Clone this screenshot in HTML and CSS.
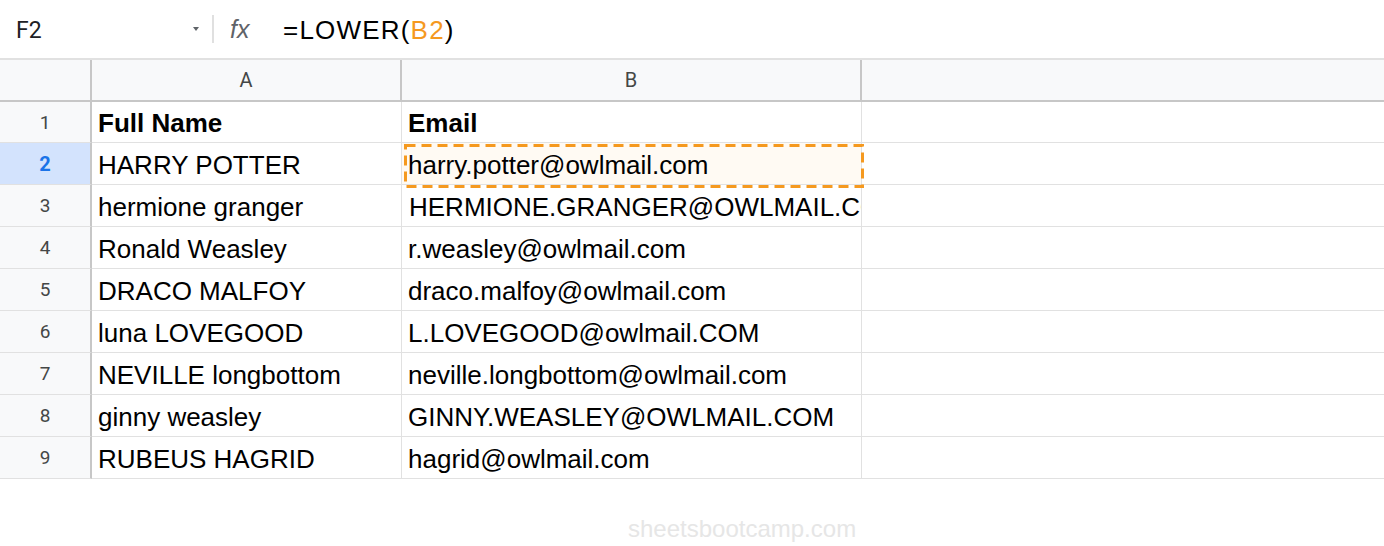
FILE: index.html
```html
<!DOCTYPE html>
<html>
<head>
<meta charset="utf-8">
<link rel="stylesheet" href="styles.css">
</head>
<body>
<div class="formula-bar">
  <div class="name-box"><span class="name">F2</span><span class="caret"></span></div>
  <div class="sep"></div>
  <div class="fx">fx</div>
  <div class="formula">=LOWER(<span class="ref">B2</span>)</div>
</div>
<div class="grid">
  <div class="hdr corner"></div>
  <div class="hdr col-a">A</div>
  <div class="hdr col-b">B</div>
  <div class="hdr fill"></div>

  <div class="rn first">1</div>
  <div class="c a first bold">Full Name</div>
  <div class="c b first bold">Email</div>
  <div class="c f first"></div>

  <div class="rn sel">2</div>
  <div class="c a">HARRY POTTER</div>
  <div class="c b active"><span class="txt">harry.potter@owlmail.com</span><svg class="ants" width="460" height="44" viewBox="0 0 460 44"><rect x="1.5" y="1.5" width="457" height="41" fill="none" stroke="#f5991f" stroke-width="3" stroke-dasharray="10 6"/></svg></div>
  <div class="c f"></div>

  <div class="rn">3</div>
  <div class="c a">hermione granger</div>
  <div class="c b clip">HERMIONE.GRANGER@OWLMAIL.COM</div>
  <div class="c f"></div>

  <div class="rn">4</div>
  <div class="c a">Ronald Weasley</div>
  <div class="c b">r.weasley@owlmail.com</div>
  <div class="c f"></div>

  <div class="rn">5</div>
  <div class="c a">DRACO MALFOY</div>
  <div class="c b">draco.malfoy@owlmail.com</div>
  <div class="c f"></div>

  <div class="rn">6</div>
  <div class="c a">luna LOVEGOOD</div>
  <div class="c b">L.LOVEGOOD@owlmail.COM</div>
  <div class="c f"></div>

  <div class="rn">7</div>
  <div class="c a">NEVILLE longbottom</div>
  <div class="c b">neville.longbottom@owlmail.com</div>
  <div class="c f"></div>

  <div class="rn">8</div>
  <div class="c a">ginny weasley</div>
  <div class="c b">GINNY.WEASLEY@OWLMAIL.COM</div>
  <div class="c f"></div>

  <div class="rn">9</div>
  <div class="c a">RUBEUS HAGRID</div>
  <div class="c b">hagrid@owlmail.com</div>
  <div class="c f"></div>
</div>
<div class="footer"><span class="watermark">sheetsbootcamp.com</span></div>
</body>
</html>
```
FILE: styles.css
```css
html, body {
  margin: 0;
  padding: 0;
  background: #ffffff;
  font-family: "Liberation Sans", Arial, sans-serif;
  color: #000;
}

.formula-bar {
  height: 58px;
  box-sizing: border-box;
  padding-top: 3px;
  display: flex;
  align-items: center;
  background: #fff;
}

.name-box {
  width: 212px;
  display: flex;
  align-items: center;
  padding-left: 16px;
  box-sizing: border-box;
}

.name {
  font-family: Roboto, "Liberation Sans", sans-serif;
  font-size: 23px;
  color: #202124;
  flex: 1;
}

.caret {
  width: 0;
  height: 0;
  border-left: 3px solid transparent;
  border-right: 3px solid transparent;
  border-top: 4px solid #5f6368;
  margin-right: 13px;
  margin-top: -3px;
}

.sep {
  width: 2px;
  height: 28px;
  margin-top: -3px;
  background: #e0e0e0;
}

.fx {
  font-family: "Liberation Sans", Arial, sans-serif;
  font-style: italic;
  font-size: 25px;
  color: #5f6368;
  margin-left: 16px;
  width: 53px;
  margin-top: -3px;
}

.formula {
  font-size: 26px;
  letter-spacing: 1.2px;
  color: #000;
}

.ref {
  color: #f5991f;
}

.grid {
  display: grid;
  grid-template-columns: 92px 310px 460px 1fr;
  border-top: 2px solid #e1e1e1;
}

.hdr {
  height: 40px;
  background: #f8f9fa;
  border-bottom: 2px solid #c7c7c7;
  display: flex;
  align-items: center;
  justify-content: center;
  font-family: Roboto, "Liberation Sans", sans-serif;
  font-size: 20px;
  color: #444746;
}

.corner, .col-a, .col-b {
  border-right: 2px solid #c7c7c7;
}

.corner { width: 90px; }

.rn {
  height: 41px;
  background: #f8f9fa;
  border-right: 2px solid #c7c7c7;
  border-bottom: 1px solid #e1e1e1;
  display: flex;
  align-items: center;
  justify-content: center;
  font-family: Roboto, "Liberation Sans", sans-serif;
  font-size: 19px;
  color: #444746;
}

.rn.first, .c.first { height: 40px; }

.rn.sel {
  background: #d3e3fd;
  color: #1a73e8;
  font-weight: bold;
  font-size: 20px;
}

.c {
  height: 41px;
  border-bottom: 1px solid #e1e1e1;
  display: flex;
  align-items: flex-end;
  box-sizing: content-box;
  font-size: 26px;
  line-height: 38px;
  white-space: nowrap;
  overflow: hidden;
  position: relative;
}

.c.a {
  border-right: 1px solid #e1e1e1;
  padding-left: 6px;
}

.c.b {
  border-right: 1px solid #e1e1e1;
  padding-left: 6px;
}

.c.b.clip {
  padding-left: 7px;
}

.bold { font-weight: bold; }

.c.active {
  background: #fffaf3;
  overflow: visible;
  z-index: 2;
}

.ants {
  position: absolute;
  left: 2px;
  top: 1px;
}

.txt { position: relative; z-index: 1; }

.footer {
  height: 67px;
  position: relative;
}

.watermark {
  position: absolute;
  left: 628px;
  top: 36px;
  font-size: 24px;
  color: #e6e6e6;
}
```
